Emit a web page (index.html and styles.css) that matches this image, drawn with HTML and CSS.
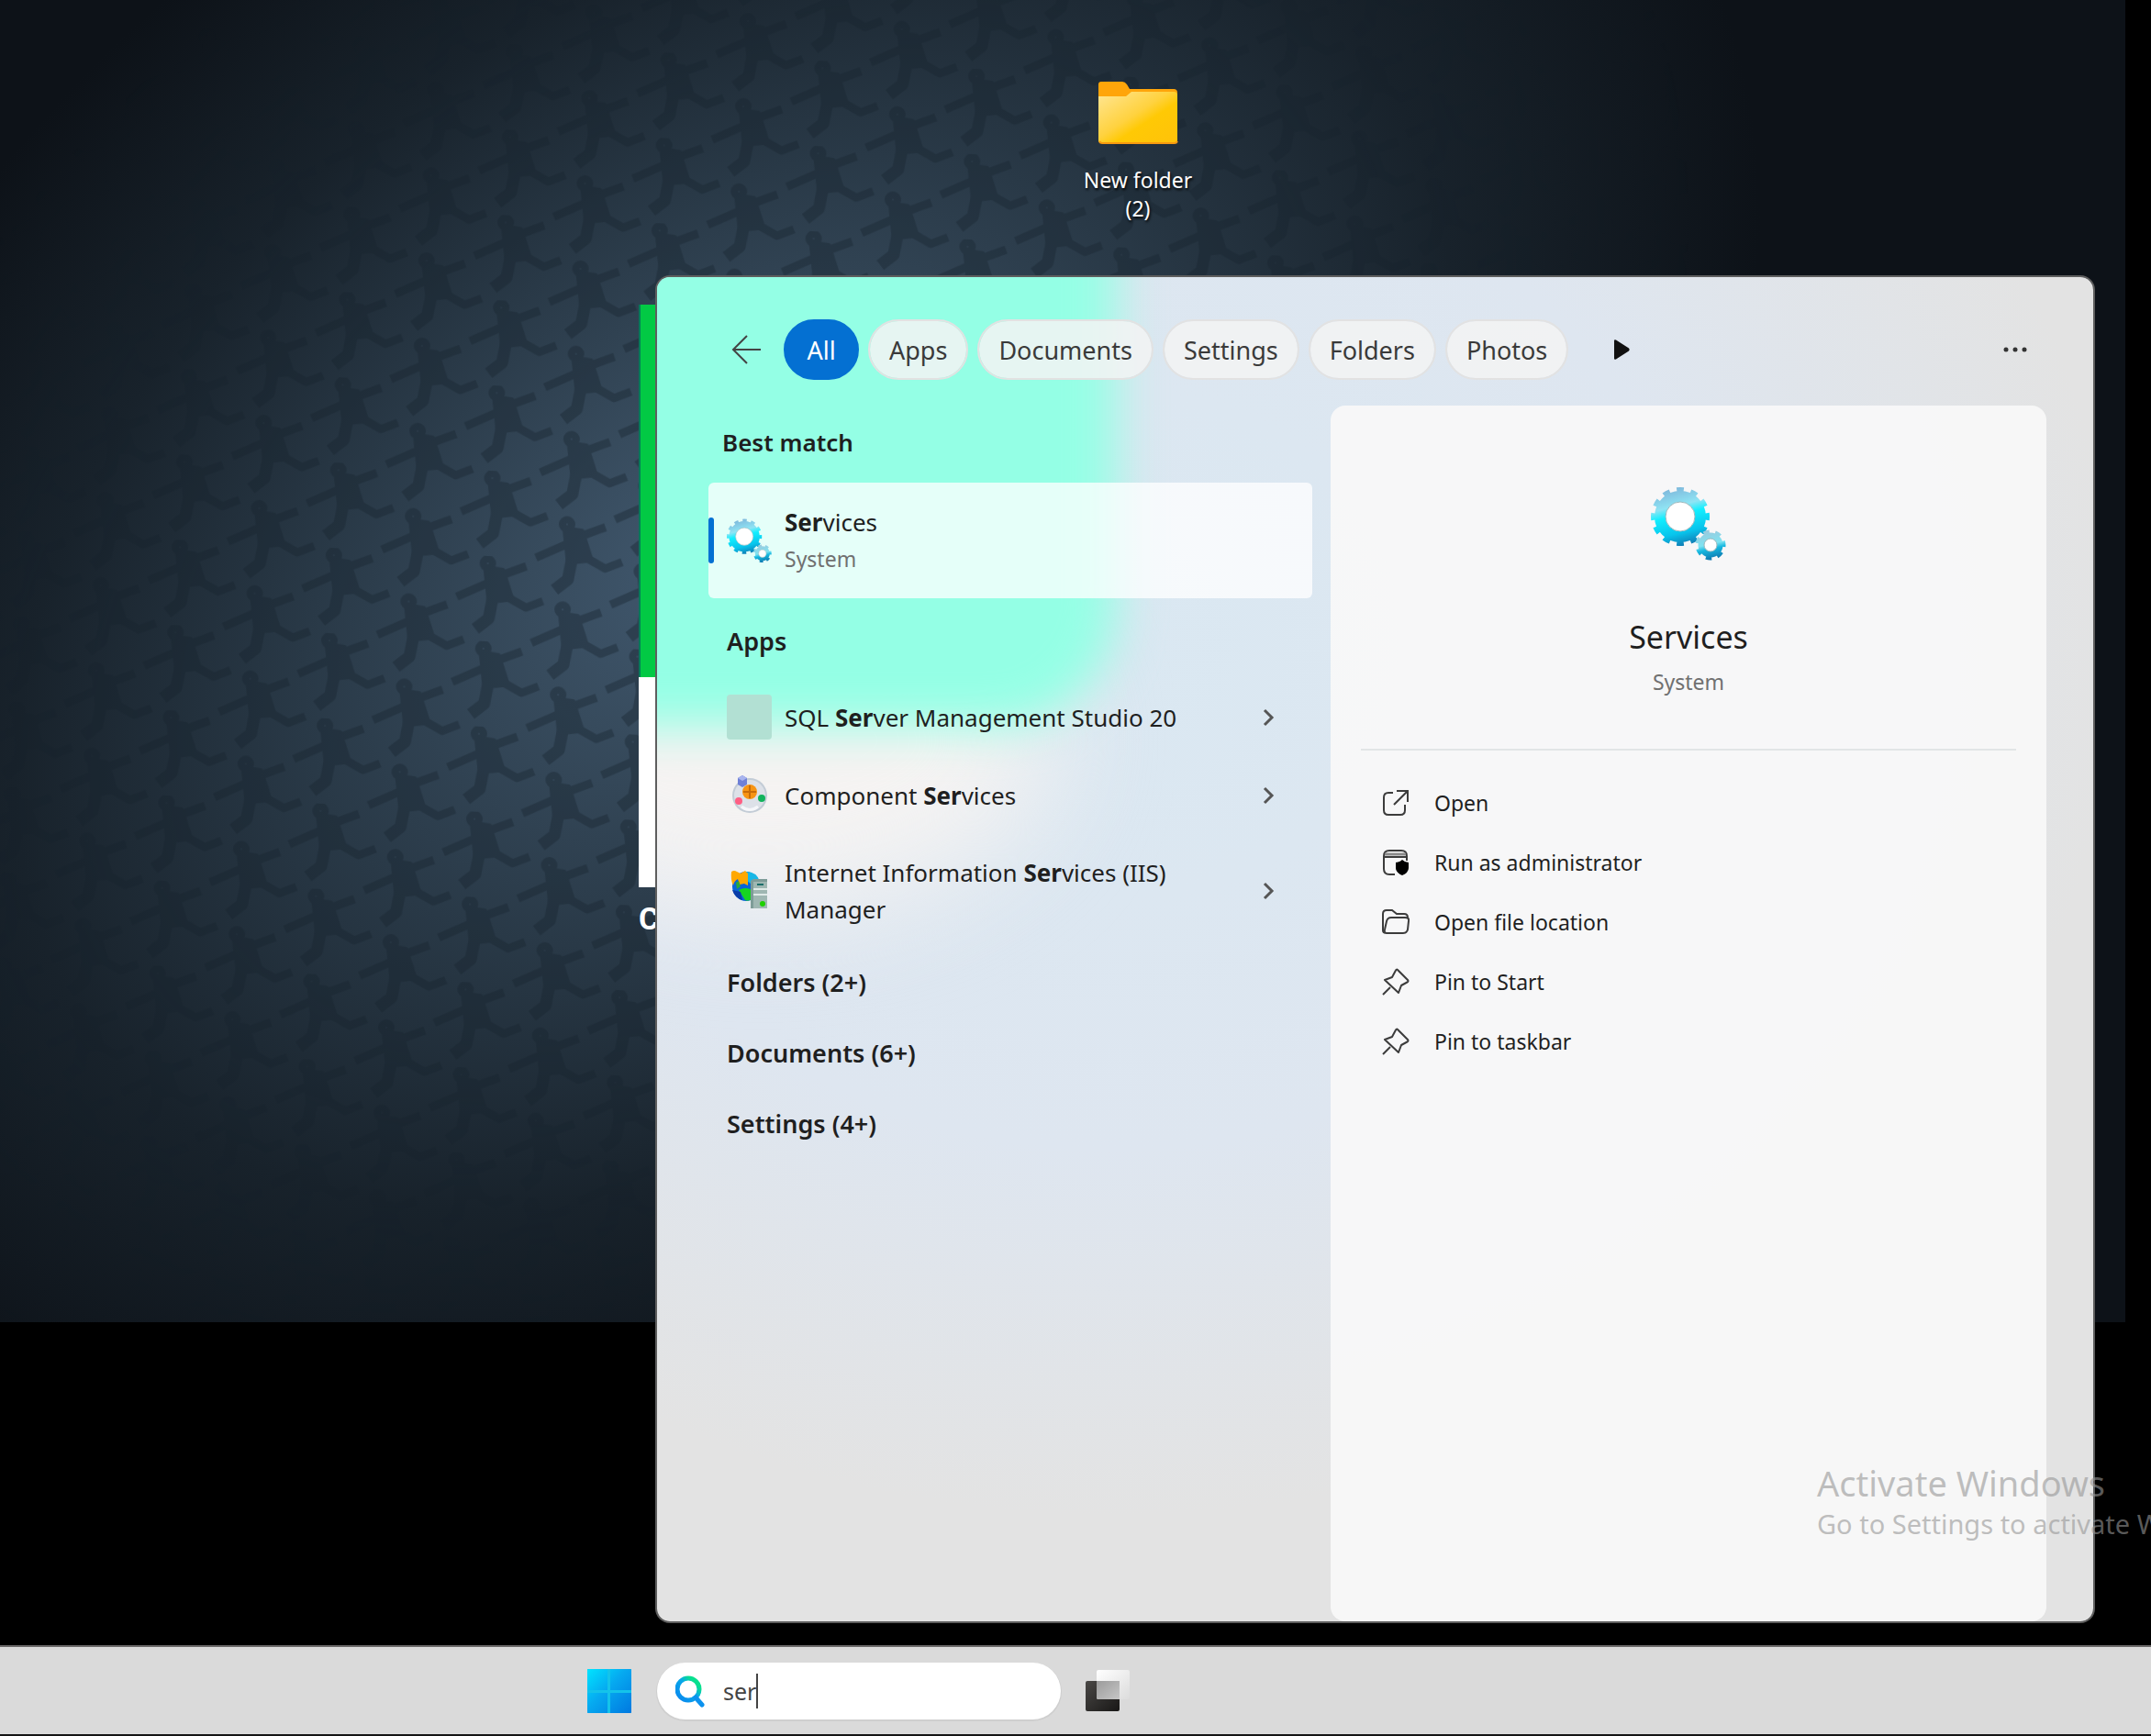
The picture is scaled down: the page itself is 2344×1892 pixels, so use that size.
FILE: index.html
```html
<!DOCTYPE html>
<html lang="en">
<head>
<meta charset="utf-8">
<title>Search</title>
<link rel="stylesheet" href="styles.css">
</head>
<body>
<svg class="defs" aria-hidden="true">
  <defs>
    <linearGradient id="gearBig" gradientUnits="userSpaceOnUse" x1="24" y1="2" x2="40" y2="66">
      <stop offset="0" stop-color="#7fb9dc"/><stop offset=".3" stop-color="#8fe4f4"/><stop offset=".45" stop-color="#12efff"/><stop offset=".75" stop-color="#08c4ec"/><stop offset="1" stop-color="#1272ac"/>
    </linearGradient>
    <linearGradient id="gearSmall" gradientUnits="userSpaceOnUse" x1="60" y1="48" x2="68" y2="82">
      <stop offset="0" stop-color="#9cc8dc"/><stop offset=".45" stop-color="#7fe4f2"/><stop offset=".6" stop-color="#16b8e0"/><stop offset="1" stop-color="#0b6aa4"/>
    </linearGradient>
    <symbol id="gears" viewBox="0 0 82 82">
      <g fill="none" stroke="url(#gearBig)">
        <circle cx="32" cy="33" r="22" stroke-width="12"/>
        <circle cx="32" cy="33" r="29" stroke-width="6" pathLength="24" stroke-dasharray="1 1" stroke-dashoffset=".5"/>
      </g>
      <circle cx="32" cy="33" r="16" fill="#fff" stroke="#9bb8bd" stroke-width="1"/>
      <g fill="none" stroke="url(#gearSmall)">
        <circle cx="65" cy="64" r="10" stroke-width="7"/>
        <circle cx="65" cy="64" r="14" stroke-width="5" pathLength="14" stroke-dasharray="1 1" stroke-dashoffset=".7"/>
      </g>
      <circle cx="65" cy="64" r="7" fill="#fff" stroke="#9bb8bd" stroke-width="1"/>
    </symbol>
    <symbol id="chevron" viewBox="0 0 14 20">
      <path d="M3 2l8 8-8 8" fill="none" stroke="#555" stroke-width="3"/>
    </symbol>
    <symbol id="pin" viewBox="0 0 30 30">
      <path d="M1 29l8-8M17 2l11 11c.8.9.5 2-.6 2.500L21 19l-3 8L3 13l8-3 4-7.500c.5-1 1.300-1.200 2-.5z" fill="none" stroke="#3c3c3c" stroke-width="2" stroke-linejoin="round"/>
    </symbol>
  </defs>
</svg>

<div class="desktop">
  <main class="workspace">
    <svg class="wallpaper" aria-hidden="true">
      <defs>
        <radialGradient id="glow" gradientUnits="userSpaceOnUse" cx="0" cy="0" r="1" gradientTransform="translate(800 600) rotate(-38) scale(1250 860)">
          <stop offset="0" stop-color="#435b72"/><stop offset=".2" stop-color="#374b5d"/><stop offset=".42" stop-color="#293947"/><stop offset=".7" stop-color="#18222b"/><stop offset="1" stop-color="#0d1218"/>
        </radialGradient>
        <pattern id="runners" patternUnits="userSpaceOnUse" width="168" height="93" patternTransform="translate(12 20) rotate(3)">
          <g id="runner" fill="none" stroke="#14202a" stroke-width="10" stroke-linejoin="round">
            <path d="M43 12l20 2 12 32-26 4z" fill="#14202a" stroke-width="4"/>
            <circle cx="46" cy="8" r="4"/>
            <path d="M62 20L88 9M54 26L14 46M66 42l24 12 18-8" stroke-width="9"/>
            <path d="M54 40l-4 28-14 12" stroke-width="13"/>
          </g>
          <use href="#runner" x="84" y="46"/>
          <use href="#runner" x="-84" y="46"/>
          <use href="#runner" x="84" y="-47"/>
          <use href="#runner" x="-84" y="-47"/>
        </pattern>
        <radialGradient id="fade" gradientUnits="userSpaceOnUse" cx="0" cy="0" r="1" gradientTransform="translate(780 600) rotate(-38) scale(1200 800)">
          <stop offset="0" stop-color="#fff"/><stop offset=".55" stop-color="#ccc"/><stop offset="1" stop-color="#000"/>
        </radialGradient>
        <mask id="fadeMask" maskUnits="userSpaceOnUse" x="0" y="0" width="4000" height="3000"><rect width="100%" height="100%" fill="url(#fade)"/></mask>
      </defs>
      <rect width="100%" height="100%" fill="url(#glow)"/>
      <rect width="100%" height="100%" fill="url(#runners)" opacity=".38" mask="url(#fadeMask)"/>
    </svg>

    <div class="logo-card" aria-hidden="true">
      <div class="logo-top"></div>
      <div class="logo-bottom"></div>
      <div class="logo-text">C</div>
    </div>

    <button class="desk-icon" type="button">
      <svg width="88" height="70" viewBox="0 0 88 70" aria-hidden="true">
        <defs>
          <linearGradient id="folder" x1="0" y1="0" x2="1" y2="1"><stop offset="0" stop-color="#ffe695"/><stop offset=".45" stop-color="#ffd23f"/><stop offset=".6" stop-color="#ffc905"/><stop offset="1" stop-color="#ffc20a"/></linearGradient>
        </defs>
        <path d="M1 5q0-3 3-3h23q3 0 5 3l3 5h48q4 0 4 4v50H1z" fill="#ffa50a"/>
        <path d="M1 18h30l6-5h46q4 0 4 4v49q0 3-3 3H4q-3 0-3-3z" fill="url(#folder)"/>
        <path d="M2 67q1 2 3 2h79q2 0 3-2" fill="none" stroke="#f79a10" stroke-width="2"/>
      </svg>
      <span>New folder (2)</span>
    </button>

    <section class="panel" aria-label="Search results">
      <header class="filters">
        <button class="back" type="button" aria-label="Back">
          <svg width="32" height="34" viewBox="0 0 32 34" aria-hidden="true"><path d="M17 2L2 17l15 15M2 17h30" fill="none" stroke="#444" stroke-width="2"/></svg>
        </button>
        <button class="pill active" type="button">All</button>
        <button class="pill" type="button">Apps</button>
        <button class="pill" type="button">Documents</button>
        <button class="pill" type="button">Settings</button>
        <button class="pill" type="button">Folders</button>
        <button class="pill" type="button">Photos</button>
        <button class="next" type="button" aria-label="More filters">
          <svg width="20" height="24" viewBox="0 0 20 24" aria-hidden="true"><path d="M2 2.500v19q0 2 2 1l14-9q1.500-1.500 0-3L4 1.500q-2-1-2 1z" fill="#111"/></svg>
        </button>
        <button class="more" type="button" aria-label="Options">
          <svg width="28" height="8" viewBox="0 0 28 8" aria-hidden="true"><g fill="#333"><circle cx="4" cy="4" r="2.500"/><circle cx="14" cy="4" r="2.500"/><circle cx="24" cy="4" r="2.500"/></g></svg>
        </button>
      </header>

      <div class="body">
        <div class="results">
          <h2 class="first">Best match</h2>
          <button class="best" type="button">
            <svg class="app-icon" aria-hidden="true"><use href="#gears"/></svg>
            <span class="best-text"><span class="name"><b>Ser</b>vices</span><span class="kind">System</span></span>
          </button>

          <h2 class="apps-title">Apps</h2>
          <ul class="apps">
            <li><button class="row" type="button">
              <span class="placeholder"></span>
              <span class="label">SQL <b>Ser</b>ver Management Studio 20</span>
              <svg class="chev" aria-hidden="true"><use href="#chevron"/></svg>
            </button></li>
            <li><button class="row" type="button">
              <svg class="app-icon" viewBox="0 0 49 49" aria-hidden="true">
                <circle cx="25" cy="25" r="19" fill="#c3ccd6"/><circle cx="25" cy="25" r="17" fill="#dde1e8"/>
                <path d="M12 13V6l5-3 5 3v7l-5 3z" fill="#6f80d6"/><path d="M12 6l5-3 5 3-5 3z" fill="#a9b4ee"/>
                <circle cx="25" cy="21" r="8" fill="#f79413"/><path d="M25 14v14M18 21h14" stroke="#c86c08" stroke-width="2"/>
                <circle cx="13" cy="31" r="4" fill="#ff5f84"/><circle cx="38" cy="28" r="4" fill="#12b35c"/>
                <path d="M16 37q9 7 18 0" fill="none" stroke="#f6f7fa" stroke-width="3"/>
              </svg>
              <span class="label">Component <b>Ser</b>vices</span>
              <svg class="chev" aria-hidden="true"><use href="#chevron"/></svg>
            </button></li>
            <li><button class="row tall" type="button">
              <svg class="app-icon" viewBox="0 0 49 49" aria-hidden="true">
                <ellipse cx="21" cy="20" rx="15" ry="16" fill="#0a63d8"/>
                <path d="M21 4q12 0 15 11l-9 3-7-6z" fill="#18b7e6"/>
                <path d="M13 24q8-4 14 0l2 8q-4 5-9 3z" fill="#16d422"/><path d="M6 24q3 9 11 11l-2-9z" fill="#0a3da8"/>
                <path d="M5 4q3-2 6 0l4 2 5-3 3 3v13l-4-2-5 1-2-6q-4 2-5 7-3-6-2-15z" fill="#ffa800"/><path d="M10 16l3-2 2 6-4 3z" fill="#28a83c"/>
                <path d="M26 14l3-2h15v32H26z" fill="#7e9c98"/><path d="M29 15h15v29H29z" fill="#9fb7b2"/>
                <path d="M29 23h15M29 29h15" stroke="#dfeae7" stroke-width="2"/><path d="M33 18h7" stroke="#1c6e6a" stroke-width="2"/>
                <circle cx="39" cy="39" r="3" fill="#1ed000"/>
              </svg>
              <span class="label">Internet Information <b>Ser</b>vices (IIS) Manager</span>
              <svg class="chev" aria-hidden="true"><use href="#chevron"/></svg>
            </button></li>
          </ul>

          <div class="groups">
            <h2>Folders (2+)</h2>
            <h2>Documents (6+)</h2>
            <h2>Settings (4+)</h2>
          </div>
        </div>

        <aside class="detail">
          <div class="hero">
            <svg class="hero-icon" aria-hidden="true"><use href="#gears"/></svg>
            <h1>Services</h1>
            <p>System</p>
          </div>
          <ul class="actions">
            <li><button type="button">
              <svg width="30" height="30" viewBox="0 0 30 30" aria-hidden="true"><path d="M12 4H7Q2 4 2 9v14q0 5 5 5h13q5 0 5-5v-6M16 2h12v12M28 2L13 17" fill="none" stroke="#3c3c3c" stroke-width="2"/></svg>Open</button></li>
            <li><button type="button">
              <svg width="30" height="30" viewBox="0 0 30 30" aria-hidden="true"><path d="M14 28H8q-6 0-6-6V8q0-6 6-6h13q6 0 6 6v5M2 9h25" fill="none" stroke="#3c3c3c" stroke-width="2"/><path d="M3 6h23" stroke="#8a8a8a" stroke-width="3"/><path d="M22 12q3 3 7 3v6q0 5-7 8-7-3-7-8v-6q4 0 7-3z" fill="#000"/></svg>Run as administrator</button></li>
            <li><button type="button">
              <svg width="30" height="30" viewBox="0 0 30 30" aria-hidden="true"><path d="M1 24V6q0-4 4-4h6l5 4h8q4 0 4 4M5 27q-4 0-4-3M5 27q-3 0-2-4l2-9q1-4 5-4h15q5 0 4 4l-1 9q-1 4-5 4z" fill="none" stroke="#3c3c3c" stroke-width="2"/></svg>Open file location</button></li>
            <li><button type="button"><svg width="30" height="30" aria-hidden="true"><use href="#pin"/></svg>Pin to Start</button></li>
            <li><button type="button"><svg width="30" height="30" aria-hidden="true"><use href="#pin"/></svg>Pin to taskbar</button></li>
          </ul>
        </aside>
      </div>
    </section>

    <div class="watermark">
      <div class="wm-title">Activate Windows</div>
      <div class="wm-text">Go to Settings to activate Windows.</div>
    </div>
  </main>

  <footer class="taskbar">
    <button class="start" type="button" aria-label="Start">
      <svg width="48" height="48" viewBox="0 0 48 48" aria-hidden="true">
        <defs><linearGradient id="win" gradientUnits="userSpaceOnUse" x1="0" y1="0" x2="48" y2="48"><stop offset="0" stop-color="#00e4ff"/><stop offset=".45" stop-color="#06a9f0"/><stop offset="1" stop-color="#0078e0"/></linearGradient></defs>
        <rect width="48" height="48" rx="1" fill="#14c3ea"/>
        <path d="M0 1q0-1 1-1h21v23H0zM25 0h22q1 0 1 1v22H25zM0 26h22v22H1q-1 0-1-1zM25 26h23v21q0 1-1 1H25z" fill="url(#win)"/>
      </svg>
    </button>
    <label class="search">
      <svg width="32" height="36" viewBox="0 0 32 36" aria-hidden="true">
        <defs><linearGradient id="mag" x1="0" y1="1" x2="1" y2="0"><stop offset="0" stop-color="#0a86ee"/><stop offset=".55" stop-color="#08a8ea"/><stop offset=".8" stop-color="#08e08e"/><stop offset="1" stop-color="#08e08e"/></linearGradient></defs>
        <circle cx="14" cy="16" r="12" fill="none" stroke="url(#mag)" stroke-width="5"/>
        <path d="M22 25l7 8" stroke="#0c92ee" stroke-width="5" stroke-linecap="round"/>
      </svg>
      <input type="text" value="ser" size="2" aria-label="Search"><span class="caret"></span>
    </label>
    <button class="taskview" type="button" aria-label="Task view">
      <svg width="50" height="48" viewBox="0 0 50 48" aria-hidden="true">
        <defs>
          <linearGradient id="tvDark" x1="0" y1="0" x2="1" y2="1"><stop offset="0" stop-color="#4a4846"/><stop offset="1" stop-color="#181716"/></linearGradient>
          <linearGradient id="tvLight" x1="0" y1="0" x2="1" y2="1"><stop offset="0" stop-color="#fff"/><stop offset="1" stop-color="#dcdcdc"/></linearGradient>
          <linearGradient id="tvMid" x1="0" y1="0" x2="1" y2="1"><stop offset="0" stop-color="#9b9b9b"/><stop offset="1" stop-color="#c6c6c6"/></linearGradient>
        </defs>
        <rect x="1" y="13" width="37" height="33" rx="2" fill="url(#tvDark)"/>
        <rect x="13" y="1" width="36" height="32" rx="2" fill="url(#tvLight)"/>
        <path d="M13 13h25v20H15q-2 0-2-2z" fill="url(#tvMid)"/>
      </svg>
    </button>
  </footer>
</div>
</body>
</html>
```
FILE: styles.css
```css
* { box-sizing: border-box; }

body {
  margin: 0;
  background: #000;
  color: #1f1f1f;
  font-family: "Noto Sans", "Open Sans", sans-serif;
  font-size: 26px;
}

button, input { font: inherit; color: inherit; }
button { padding: 0; border: 0; background: none; text-align: left; }
h1, h2, p, ul { margin: 0; padding: 0; font-weight: 400; }
ul { list-style: none; }
svg { display: block; flex: none; }
b { font-weight: 700; }
.defs { position: absolute; width: 0; height: 0; }

.desktop {
  display: grid;
  grid-template-rows: 1fr auto;
  min-height: 100vh;
}

/* Desktop surface */
.workspace {
  position: relative;
  overflow: hidden;
  padding: 302px 63px 26px 716px;
  display: grid;
}
.wallpaper {
  position: absolute;
  top: 0;
  left: 0;
  width: calc(100% - 28px);
  height: 1441px;
}
.logo-card { position: absolute; left: 696px; top: 332px; width: 80px; }
.logo-top { height: 406px; background: #02c944; border-left: 2px solid #067a58; }
.logo-bottom { height: 229px; background: #fff; }
.logo-text {
  margin-top: 14px;
  color: #fff;
  font: 700 34px/40px Roboto, sans-serif;
}
.desk-icon {
  position: absolute;
  left: 1160px;
  top: 87px;
  width: 160px;
  display: flex;
  flex-direction: column;
  align-items: center;
  gap: 24px;
  color: #fff;
  font-size: 23px;
  line-height: 31px;
  text-align: center;
  text-shadow: 1px 2px 3px #000;
}
.desk-icon span { width: 130px; }

/* Search window */
.panel {
  position: relative;
  overflow: hidden;
  isolation: isolate;
  display: flex;
  flex-direction: column;
  border-radius: 14px;
  background: radial-gradient(ellipse 1150px 1000px at 500px 400px, #dae8f2 0, #dee6f0 55%, #e3e3e3 95%);
  box-shadow: 0 0 0 2px #5e5e5e;
}
.panel::before,
.panel::after {
  content: "";
  position: absolute;
  z-index: -1;
}
.panel::before {
  left: -200px;
  top: 320px;
  width: 630px;
  height: 370px;
  border-radius: 50%;
  background: #f5f3f2;
  filter: blur(60px);
}
.panel::after {
  left: -100px;
  top: -100px;
  width: 600px;
  height: 590px;
  border-radius: 0 0 130px 0;
  background: #94ffe5;
  filter: blur(25px);
}

.filters {
  display: flex;
  align-items: center;
  gap: 10px;
  padding: 46px 71px 28px 81px;
}
.back { margin-right: 15px; }
.pill {
  height: 66px;
  padding: 0 21px;
  border: 2px solid #e2e2e2;
  border-radius: 33px;
  background: rgba(243, 243, 243, .86);
  background-clip: padding-box;
  color: #3a3a3a;
  font-size: 27px;
  text-align: center;
}
.pill.active {
  min-width: 82px;
  border-color: #0470d2;
  background: #0470d2;
  color: #fff;
}
.next { margin-left: 38px; }
.more { margin-left: auto; }

.body {
  flex: 1;
  display: grid;
  grid-template-columns: 658fr 780fr;
  gap: 20px;
  padding: 0 51px 0 56px;
}

.results h2 {
  padding-left: 20px;
  font-weight: 600;
  font-size: 27px;
  line-height: 40px;
}
.results .first { padding: 20px 0 0 15px; font-size: 26px; }
.best {
  position: relative;
  display: flex;
  align-items: center;
  gap: 14px;
  width: 100%;
  height: 126px;
  margin-top: 24px;
  padding-left: 20px;
  border-radius: 6px;
  background: rgba(255, 255, 255, .76);
}
.best::before {
  content: "";
  position: absolute;
  left: 0;
  top: 38px;
  width: 6px;
  height: 50px;
  border-radius: 3px;
  background: #0470d2;
}
.app-icon { width: 49px; height: 49px; }
.best-text { display: grid; }
.name { line-height: 40px; }
.kind { line-height: 40px; font-size: 23px; color: #707070; }

.results .apps-title { margin: 27px 0 20px; }
.row {
  display: flex;
  align-items: center;
  gap: 14px;
  width: 100%;
  min-height: 85px;
  padding: 0 41px 0 20px;
  line-height: 40px;
}
.tall { min-height: 123px; }
.placeholder {
  width: 49px;
  height: 49px;
  border-radius: 4px;
  background: #b2e0d3;
}
.label { flex: 1; max-width: 460px; }
.chev { width: 14px; height: 20px; margin-left: auto; }

.groups { display: grid; gap: 37px; margin-top: 19px; }

.detail {
  padding: 88px 33px 0;
  border-radius: 16px;
  background: rgba(248, 248, 248, .92);
}
.hero {
  display: flex;
  flex-direction: column;
  align-items: center;
  padding-bottom: 58px;
  border-bottom: 2px solid #e2e5e6;
}
.hero-icon { width: 82px; height: 82px; }
.hero h1 { margin-top: 57px; font-size: 34px; line-height: 50px; }
.hero p { margin-top: 9px; font-size: 23px; line-height: 30px; color: #707070; }
.actions { padding-top: 24px; }
.actions button {
  display: flex;
  align-items: center;
  gap: 27px;
  width: 100%;
  height: 65px;
  padding-left: 23px;
  font-size: 23px;
}

.watermark {
  position: absolute;
  left: 1980px;
  top: 1591px;
  color: rgba(150, 150, 150, .6);
  white-space: nowrap;
}
.wm-title { font-size: 38px; line-height: 50px; }
.wm-text { font-size: 29px; line-height: 40px; }

/* Taskbar */
.taskbar {
  display: flex;
  align-items: center;
  height: 99px;
  padding-left: 640px;
  border-top: 2px solid #6a6868;
  border-bottom: 2px solid #141414;
  background: #dadada;
}
.search {
  display: flex;
  align-items: center;
  width: 440px;
  height: 62px;
  margin: 0 26px 0 28px;
  padding-left: 20px;
  border-radius: 31px;
  background: #fff;
  box-shadow: 0 1px 0 1px #cfcfcf;
}
.search input {
  field-sizing: content;
  margin-left: 20px;
  padding: 0;
  border: 0;
  outline: 0;
  background: none;
  color: #444;
  font-size: 25px;
}
.caret { width: 2px; height: 38px; background: #444; }
```
